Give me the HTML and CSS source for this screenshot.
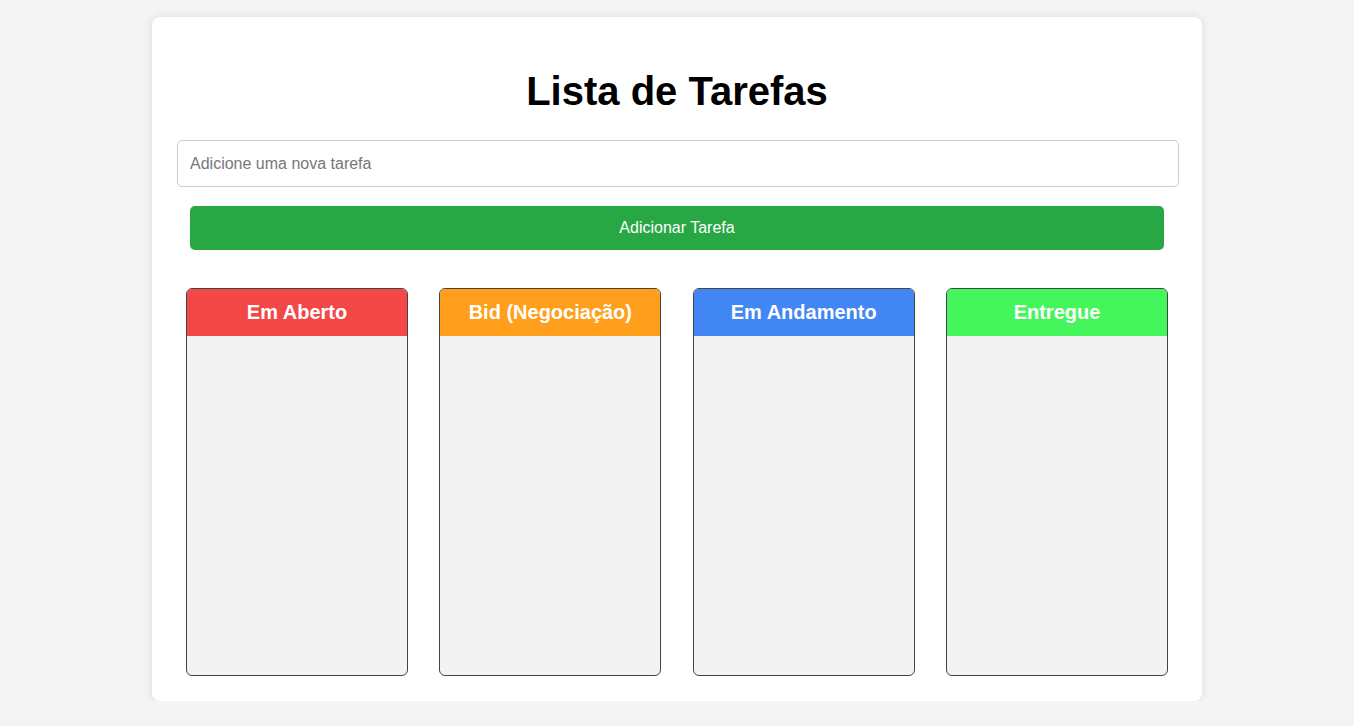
FILE: index.html
```html
<!DOCTYPE html>
<html lang="pt-BR">
<head>
<meta charset="UTF-8">
<title>Lista de Tarefas</title>
<link rel="stylesheet" href="styles.css">
</head>
<body>
<div class="container">
  <h1 class="title">Lista de Tarefas</h1>
  <input class="task-input" type="text" placeholder="Adicione uma nova tarefa">
  <button class="add-btn">Adicionar Tarefa</button>
  <div class="board">
    <div class="column">
      <h2 class="column-title red">Em Aberto</h2>
      <div class="column-body"></div>
    </div>
    <div class="column">
      <h2 class="column-title orange">Bid (Negociação)</h2>
      <div class="column-body"></div>
    </div>
    <div class="column">
      <h2 class="column-title blue">Em Andamento</h2>
      <div class="column-body"></div>
    </div>
    <div class="column">
      <h2 class="column-title green">Entregue</h2>
      <div class="column-body"></div>
    </div>
  </div>
</div>
</body>
</html>
```
FILE: styles.css
```css
html, body {
  margin: 0;
  padding: 0;
}
body {
  background: #f4f4f4;
  font-family: "Liberation Sans", Arial, sans-serif;
  padding-top: 17px;
}
.container {
  width: 1000px;
  margin: 0 auto;
  padding: 25px;
  background: #fff;
  border-radius: 8px;
  box-shadow: 0 0 10px rgba(0, 0, 0, 0.1);
  display: flex;
  flex-direction: column;
}
.title {
  margin: 26px 0 26px;
  text-align: center;
  font-size: 40px;
  line-height: 46px;
  font-weight: bold;
  color: #000;
}
.task-input {
  display: block;
  box-sizing: border-box;
  width: 1002px;
  height: 47px;
  padding: 12px;
  border: 1px solid #ccc;
  border-radius: 5px;
  font-family: "Liberation Sans", Arial, sans-serif;
  font-size: 16px;
  color: #333;
  outline: none;
}
.task-input::placeholder {
  color: #777;
}
.add-btn {
  display: block;
  margin: 19px 13px 0;
  height: 44px;
  border: none;
  border-radius: 5px;
  background: #28a745;
  color: #fff;
  font-family: "Liberation Sans", Arial, sans-serif;
  font-size: 16px;
}
.board {
  display: flex;
  justify-content: space-between;
  margin-top: 38px;
}
.column {
  width: 220px;
  margin: 0 9px 0 9px;
  height: 386px;
  border: 1px solid #444;
  border-radius: 6px;
  background: #f3f3f3;
  display: flex;
  flex-direction: column;
  overflow: hidden;
}
.column-title {
  margin: 0;
  padding: 12px;
  font-size: 20px;
  line-height: 23px;
  font-weight: bold;
  color: #fff;
  text-align: center;
}
.column-body {
  flex: 1;
}
.red { background: #f44747; }
.orange { background: #ff9f1c; }
.blue { background: #4286f4; }
.green { background: #44f65c; }
```
